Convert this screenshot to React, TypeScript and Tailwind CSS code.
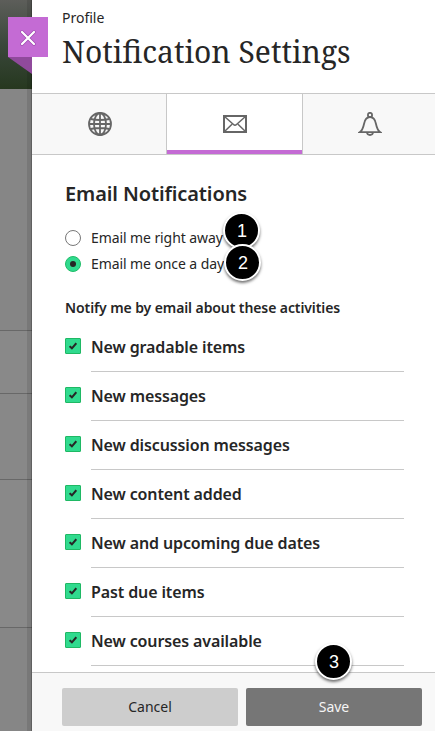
import type { ReactNode } from 'react';

const activities = [
  'New gradable items',
  'New messages',
  'New discussion messages',
  'New content added',
  'New and upcoming due dates',
  'Past due items',
  'New courses available',
];

function Marker({ n, className }: { n: number; className: string }) {
  return (
    <span
      className={`absolute flex size-[37px] items-center justify-center rounded-full border-2 border-white bg-black pl-px font-['Liberation_Sans',sans-serif] text-[18px] leading-none text-white shadow-[0_2px_3px_rgba(0,0,0,0.55)] ${className}`}
    >
      {n}
    </span>
  );
}

function Tab({ active, className = '', children }: { active?: boolean; className?: string; children: ReactNode }) {
  return (
    <button
      className={`flex items-center justify-center ${
        active
          ? 'w-[135px] shrink-0 border-b-4 border-[#c46bd4] bg-white pt-1'
          : 'bg-[#f8f8f8]'
      } ${className}`}
    >
      {children}
    </button>
  );
}

function GlobeIcon() {
  return (
    <svg width="24" height="24" viewBox="0 0 24 24" fill="none" stroke="#666" strokeWidth="1.8">
      <circle cx="12" cy="12" r="11" />
      <ellipse cx="12" cy="12" rx="6" ry="11" />
      <path d="M12 1v22M1 12h22M2.500 7q9.500 2 19 0M2.500 17q9.500-2 19 0" />
    </svg>
  );
}

function MailIcon() {
  return (
    <svg width="24" height="18" viewBox="0 0 24 18" fill="none" stroke="#666">
      <path d="M1 1h22v16H1z" strokeWidth="2" />
      <path d="M1.500 1.500 10.500 9.500Q12 11 13.500 9.500L22.500 1.500M1.500 16.500l7.500-7.300M22.500 16.500l-7.500-7.300" strokeWidth="1.5" />
    </svg>
  );
}

function BellIcon() {
  return (
    <svg width="24" height="24" viewBox="0 0 24 24" fill="none" stroke="#666" strokeWidth="1.8">
      <circle cx="12" cy="2.900" r="2.100" />
      <path d="M1.700 20.200h20.600c-2.600-1.700-3.400-3.700-4.300-8.200-.9-4.700-2.700-7-6-7s-5.100 2.300-6 7c-.9 4.500-1.700 6.500-4.300 8.200z" />
      <path d="M9 20.500c.2 1.700 1.300 2.500 3 2.500s2.800-.8 3-2.500" />
    </svg>
  );
}

export default function App() {
  return (
    <div className="relative flex h-[731px] w-[435px] overflow-hidden bg-white font-['Noto_Sans','Open_Sans',sans-serif] text-[#262626]">
      <aside className="relative w-8 shrink-0 bg-[#868686]">
        <div className="h-[89px] bg-linear-to-b from-[#5d5e5a] via-[#3a473b] via-50% to-[#26381f]" />
        <div className="h-[242px] border-b border-[#686868]" />
        <div className="h-[63px] border-b border-[#686868] bg-[#898989]" />
        <div className="h-[86px] border-b border-[#686868] bg-[#888]" />
        <div className="h-[148px] border-b border-[#686868] bg-[#898989]" />
        <div className="absolute inset-y-0 right-0 w-[5px] border-r border-black/20 bg-black/10" />
      </aside>

      <main className="flex min-w-0 flex-1 flex-col">
        <header className="h-[93px] pl-[30px] pt-2">
          <p className="text-[14px] leading-5">Profile</p>
          <h1 className="mt-1 whitespace-nowrap font-['Noto_Serif','DejaVu_Serif_Condensed','DejaVu_Serif',serif] text-[30px] leading-10">
            Notification Settings
          </h1>
        </header>

        <nav className="flex h-[62px] shrink-0 border-y border-[#c8c8c8]">
          <Tab className="w-[135px] border-r border-[#c8c8c8] pl-0.5"><GlobeIcon /></Tab>
          <Tab active><MailIcon /></Tab>
          <Tab className="flex-1 border-l border-[#c8c8c8] pl-px"><BellIcon /></Tab>
        </nav>

        <section className="h-[517px] shrink-0 pl-[33px] pr-[31px] pt-[25px]">
          <h2 className="text-[20px] font-semibold leading-7 tracking-[-0.11px]">Email Notifications</h2>
          <div className="mt-[17px] text-[14px] leading-[26px] tracking-[-0.09px]">
            <label className="flex items-center">
              <span className="size-4 rounded-full border border-[#777] bg-white" />
              <span className="ml-2.5">Email me right away</span>
            </label>
            <label className="flex items-center">
              <span className="flex size-4 items-center justify-center rounded-full border border-[#1fbd68] bg-[#30da8e]">
                <span className="size-1.5 rounded-full bg-[#262626]" />
              </span>
              <span className="ml-2.5">Email me once a day</span>
            </label>
          </div>
          <h3 className="mt-[21px] text-[14px] font-semibold leading-5 tracking-[-0.095px]">
            Notify me by email about these activities
          </h3>
          <ul className="mt-[5px]">
            {activities.map((name) => (
              <li key={name} className="flex h-[49px]">
                <span className="mt-[15px] flex size-4 items-center justify-center rounded-[1px] border border-[#1fb864] bg-[#30da8e]">
                  <svg width="8" height="8" viewBox="0 0 8 8" fill="none" stroke="#262626" strokeWidth="2">
                    <path d="M.6 4.100 2.900 6.300 7.300 1.200" />
                  </svg>
                </span>
                <span className="ml-2.5 flex-1 border-b border-[#c8c8c8] pt-1 text-[16px] font-semibold leading-6 tracking-[-0.12px]">
                  <span className="block pt-2">{name}</span>
                </span>
              </li>
            ))}
          </ul>
        </section>

        <footer className="flex h-[59px] shrink-0 gap-2 border-t border-[#c8c8c8] bg-[#f8f8f8] pl-[30px] pr-[13px] pt-[15px] text-[14px]">
          <button className="h-[38px] flex-1 rounded-[2px] bg-[#cdcdcd] pb-0.5">Cancel</button>
          <button className="h-[38px] flex-1 rounded-[2px] bg-[#767676] pb-0.5 text-[#f5f5f5]">Save</button>
        </footer>
      </main>

      <button className="absolute left-2 top-[17px] flex size-10 items-center justify-center bg-[#c46bd4] pt-0.5">
        <svg width="18" height="18" viewBox="0 0 18 18" fill="none" strokeLinecap="round">
          <path d="m3 3 12 12M15 3 3 15" stroke="#9b46ac" strokeWidth="3.500" />
          <path d="m3 3 12 12M15 3 3 15" stroke="white" strokeWidth="2.300" />
        </svg>
      </button>
      <div className="absolute left-2 top-[57px] h-[17px] w-6 bg-[#904a9c] [clip-path:polygon(0_0,100%_0,100%_100%)]" />
      <Marker n={1} className="left-[223px] top-[212px]" />
      <Marker n={2} className="left-[224px] top-[244px]" />
      <Marker n={3} className="left-[315px] top-[643px]" />
    </div>
  );
}
